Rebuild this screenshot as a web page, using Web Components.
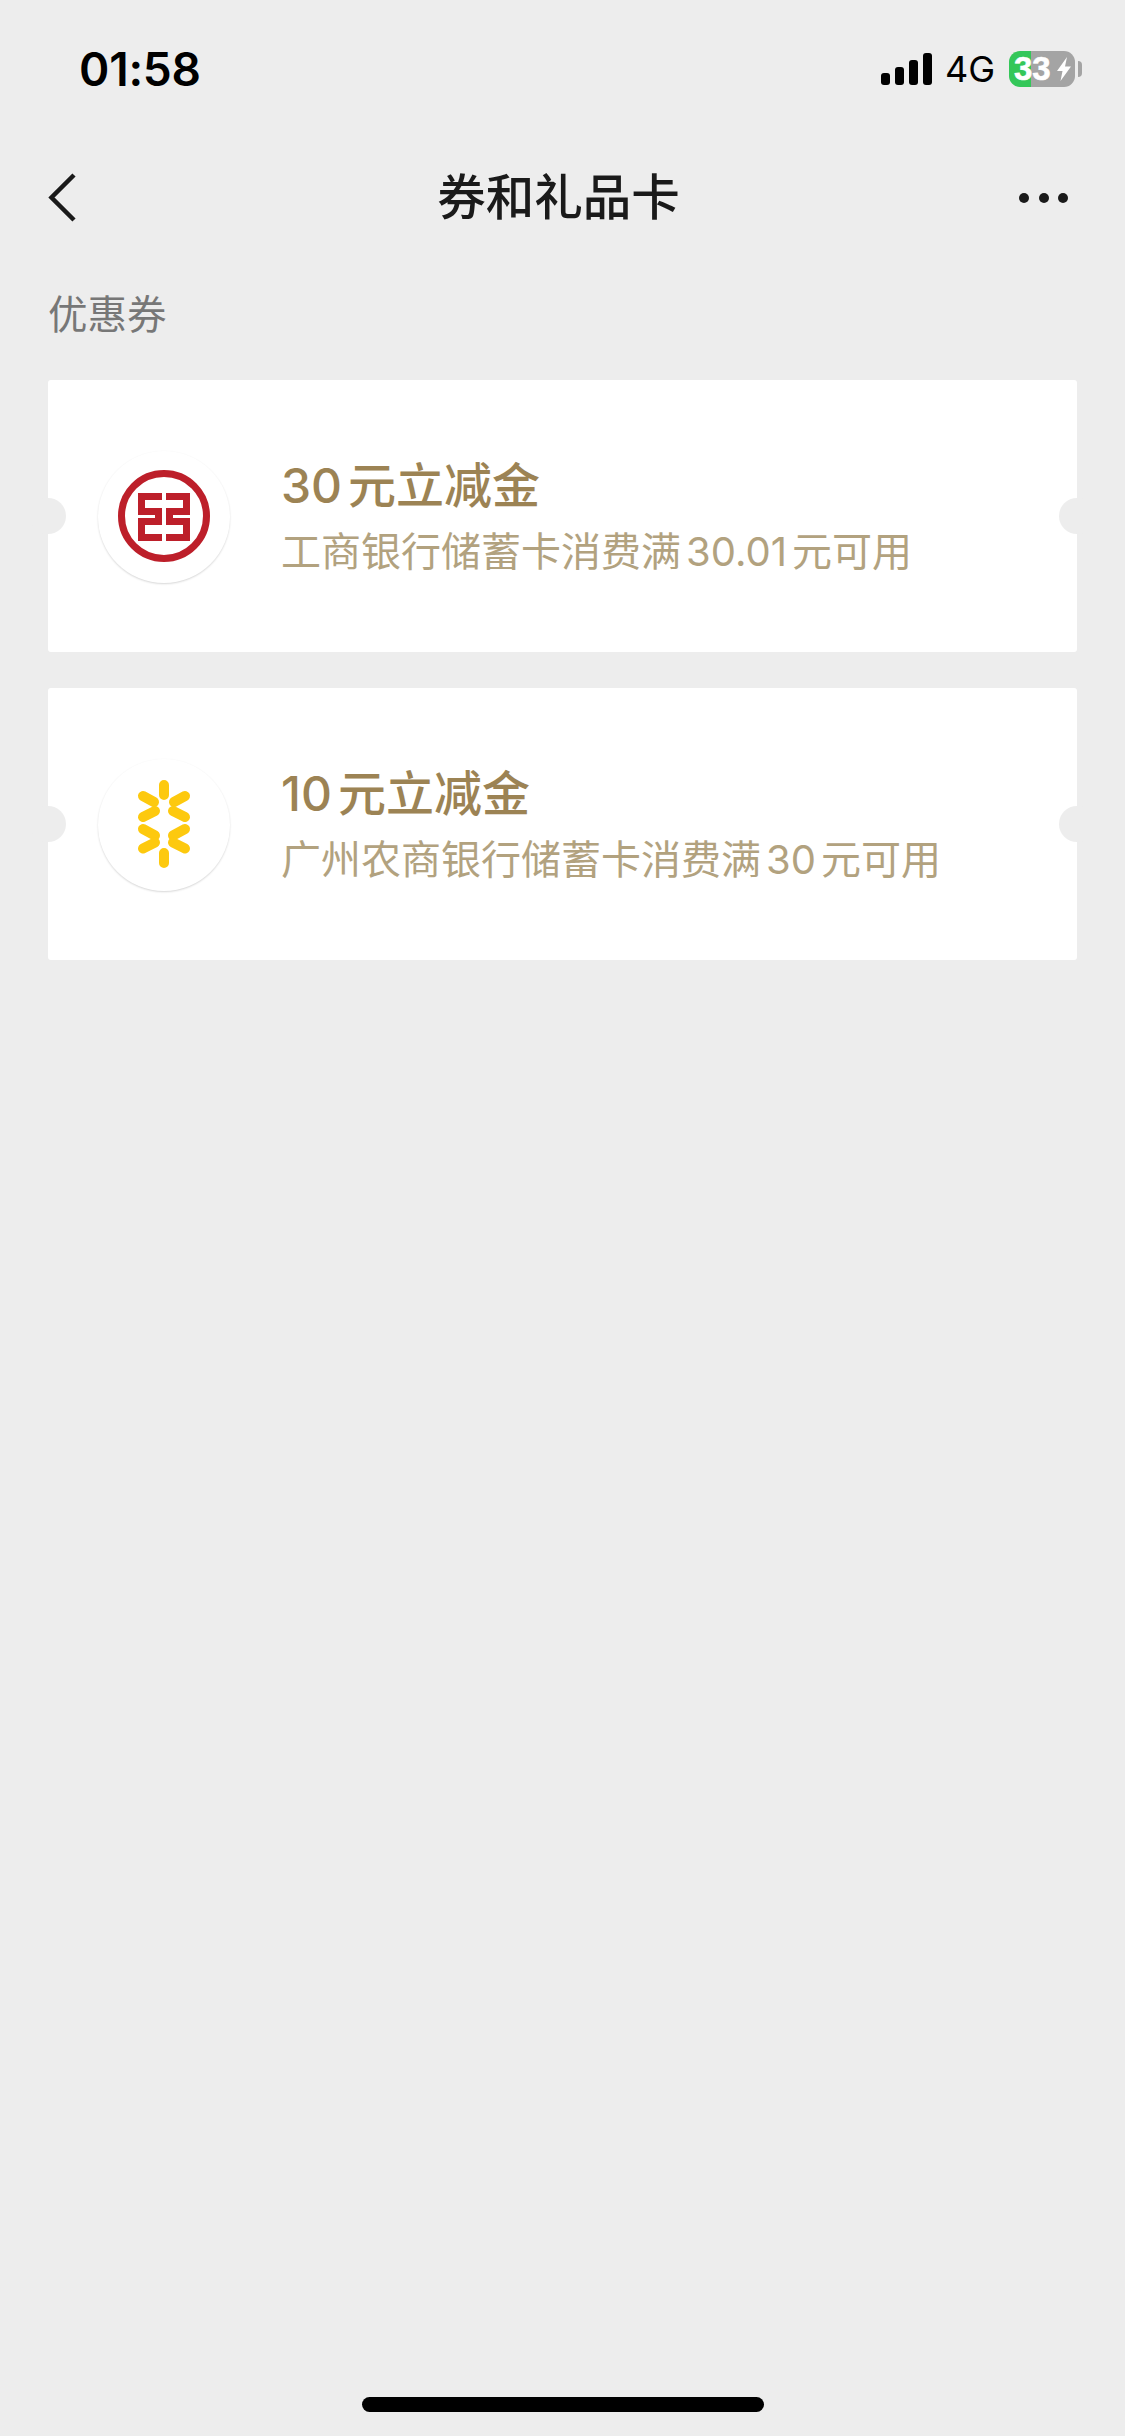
<!DOCTYPE html>
<html lang="zh-CN">
<head>
<meta charset="utf-8">
<title>券和礼品卡</title>
<style>
  html, body { margin: 0; padding: 0; background: #ededed; }
</style>
</head>
<body>
<wx-page>
  <wx-status-bar slot="top" time="01:58" net="4G" level="33"></wx-status-bar>
  <wx-nav-bar slot="top" title="券和礼品卡"></wx-nav-bar>
  <wx-section-label>优惠券</wx-section-label>
  <wx-coupon bank="icbc" heading="30元立减金" detail="工商银行储蓄卡消费满30.01元可用"></wx-coupon>
  <wx-coupon bank="grcb" heading="10元立减金" detail="广州农商银行储蓄卡消费满30元可用"></wx-coupon>
</wx-page>

<script>
const FONT = `Inter, "Noto Sans CJK SC", "Noto Sans", sans-serif`;

const BANK_LOGOS = {
  icbc: `
    <svg viewBox="0 0 132 132" width="132" height="132" fill="none" stroke="#bd1f2a">
      <circle cx="66" cy="65" r="42.5" stroke-width="7"/>
      <g stroke-width="7">
        <path d="M64 45.500H43.500V60.500H60.500V70.500H43.500V86.500H64"/>
        <path d="M68 45.500H88.500V60.500H71.500V70.500H88.500V86.500H68"/>
      </g>
    </svg>`,
  grcb: `
    <svg viewBox="0 0 132 132" width="132" height="132" fill="none" stroke="#fdc90e" stroke-width="10" stroke-linecap="round">
      <path d="M66 26v10M66 94v10"/>
      <path d="M45 37l11 6M87 37l-11 6"/>
      <path d="M45 58l12-6M87 58l-12-6"/>
      <path d="M45 70l12 6.500M87 70l-12 6.500"/>
      <path d="M45 89.500l12-6M87 89.500l-12-6"/>
    </svg>`,
};

class WxPage extends HTMLElement {
  constructor() {
    super();
    this.attachShadow({ mode: 'open' }).innerHTML = `
      <style>
        :host {
          display: flex;
          flex-direction: column;
          width: 1125px;
          height: 2436px;
          background: #ededed;
          font-family: ${FONT};
          overflow: hidden;
        }
        main {
          flex: 1;
          display: flex;
          flex-direction: column;
          gap: 36px;
          padding: 0 48px;
        }
        .home { height: 15px; display: flex; justify-content: center; margin-bottom: 24px; }
        .home i { width: 402px; border-radius: 8px; background: #000; }
      </style>
      <slot name="top"></slot>
      <main><slot></slot></main>
      <div class="home"><i></i></div>`;
  }
}

class WxStatusBar extends HTMLElement {
  constructor() {
    super();
    this.attachShadow({ mode: 'open' });
  }
  connectedCallback() {
    const time = this.getAttribute('time');
    const net = this.getAttribute('net');
    const level = this.getAttribute('level');
    this.shadowRoot.innerHTML = `
      <style>
        :host {
          display: flex;
          align-items: center;
          justify-content: space-between;
          height: 137px;
          padding: 0 43px 0 79px;
          box-sizing: border-box;
          color: #000;
        }
        .time { font-size: 46px; font-weight: 600; letter-spacing: -.2px; }
        .right { display: flex; align-items: center; }
        .signal { display: flex; align-items: flex-end; gap: 5px; height: 33px; margin-right: 13px; }
        .signal i { width: 9px; background: #000; border-radius: 3px; }
        .net { font-size: 36px; margin-right: 14px; }
        .battery {
          width: 66px;
          height: 36px;
          border-radius: 11px;
          background: linear-gradient(90deg, #34c759 22px, #a4a4a4 22px);
          color: #fff;
          font: 700 33px "Liberation Sans", sans-serif;
          -webkit-text-stroke: .6px #fff;
          display: flex;
          align-items: center;
          padding-left: 5px;
          box-sizing: border-box;
        }
        .battery svg { margin-left: 6px; flex: none; }
        .nub { width: 4px; height: 16px; margin-left: 3px; background: #a4a4a4; border-radius: 0 8px 8px 0; }
      </style>
      <span class="time">${time}</span>
      <div class="right">
        <div class="signal">
          <i style="height:12px"></i><i style="height:18px"></i><i style="height:25px"></i><i style="height:32px"></i>
        </div>
        <span class="net">${net}</span>
        <div class="battery">${level}<svg width="14" height="24" viewBox="0 0 14 24"><path fill="#fff" d="M10 0 0 14h5.500L3.500 24 14 9.500H8z"/></svg></div>
        <i class="nub"></i>
      </div>`;
  }
}

class WxNavBar extends HTMLElement {
  constructor() {
    super();
    this.attachShadow({ mode: 'open' });
  }
  connectedCallback() {
    this.shadowRoot.innerHTML = `
      <style>
        :host {
          display: grid;
          grid-template-columns: 1fr auto 1fr;
          align-items: center;
          height: 122px;
          padding: 0 56px 0 48px;
          box-sizing: border-box;
          color: #1a1a1a;
        }
        h1 { margin: 0; font-size: 48.500px; font-weight: 500; line-height: 1; }
        svg { display: block; }
        .more { justify-self: end; }
      </style>
      <svg width="30" height="50" viewBox="0 0 30 50" fill="none" stroke="#1a1a1a" stroke-width="4.500">
        <path d="M26 2 3.500 24.500 26 47"/>
      </svg>
      <h1>${this.getAttribute('title')}</h1>
      <svg class="more" width="50" height="10" viewBox="0 0 50 10" fill="#1a1a1a">
        <circle cx="5" cy="5" r="5"/><circle cx="25" cy="5" r="5"/><circle cx="44" cy="5" r="5"/>
      </svg>`;
  }
}

class WxSectionLabel extends HTMLElement {
  constructor() {
    super();
    this.attachShadow({ mode: 'open' }).innerHTML = `
      <style>
        :host {
          display: block;
          font-size: 39.500px;
          line-height: 56px;
          color: #777;
          margin: 28px 0 1px;
        }
      </style>
      <slot></slot>`;
  }
}

class WxCoupon extends HTMLElement {
  constructor() {
    super();
    this.attachShadow({ mode: 'open' });
  }
  connectedCallback() {
    const logo = BANK_LOGOS[this.getAttribute('bank')] || '';
    this.shadowRoot.innerHTML = `
      <style>
        :host {
          display: flex;
          align-items: center;
          height: 272px;
          padding-left: 50px;
          background: #fff;
          border-radius: 3px;
          position: relative;
          text-autospace: normal;
        }
        :host::before, :host::after {
          content: "";
          position: absolute;
          top: 118px;
          width: 36px;
          height: 36px;
          border-radius: 50%;
          background: #ededed;
        }
        :host::before { left: -18px; }
        :host::after { right: -18px; }
        .logo {
          width: 132px;
          height: 132px;
          margin-top: 2px;
          border-radius: 50%;
          background: #fff;
          box-shadow: 0 1px 2px rgba(0,0,0,.16);
          flex: none;
          margin-right: 51px;
        }
        svg { display: block; }
        .text { padding-top: 1px; }
        h2 { margin: 0; font-size: 48px; font-weight: 500; line-height: 64px; color: #9c8354; }
        p { margin: 7px 0 0; font-size: 40px; line-height: 54px; color: #b2a27f; }
      </style>
      <div class="logo">${logo}</div>
      <div class="text">
        <h2>${this.getAttribute('heading')}</h2>
        <p>${this.getAttribute('detail')}</p>
      </div>`;
  }
}

customElements.define('wx-page', WxPage);
customElements.define('wx-status-bar', WxStatusBar);
customElements.define('wx-nav-bar', WxNavBar);
customElements.define('wx-section-label', WxSectionLabel);
customElements.define('wx-coupon', WxCoupon);
</script>
</body>
</html>
